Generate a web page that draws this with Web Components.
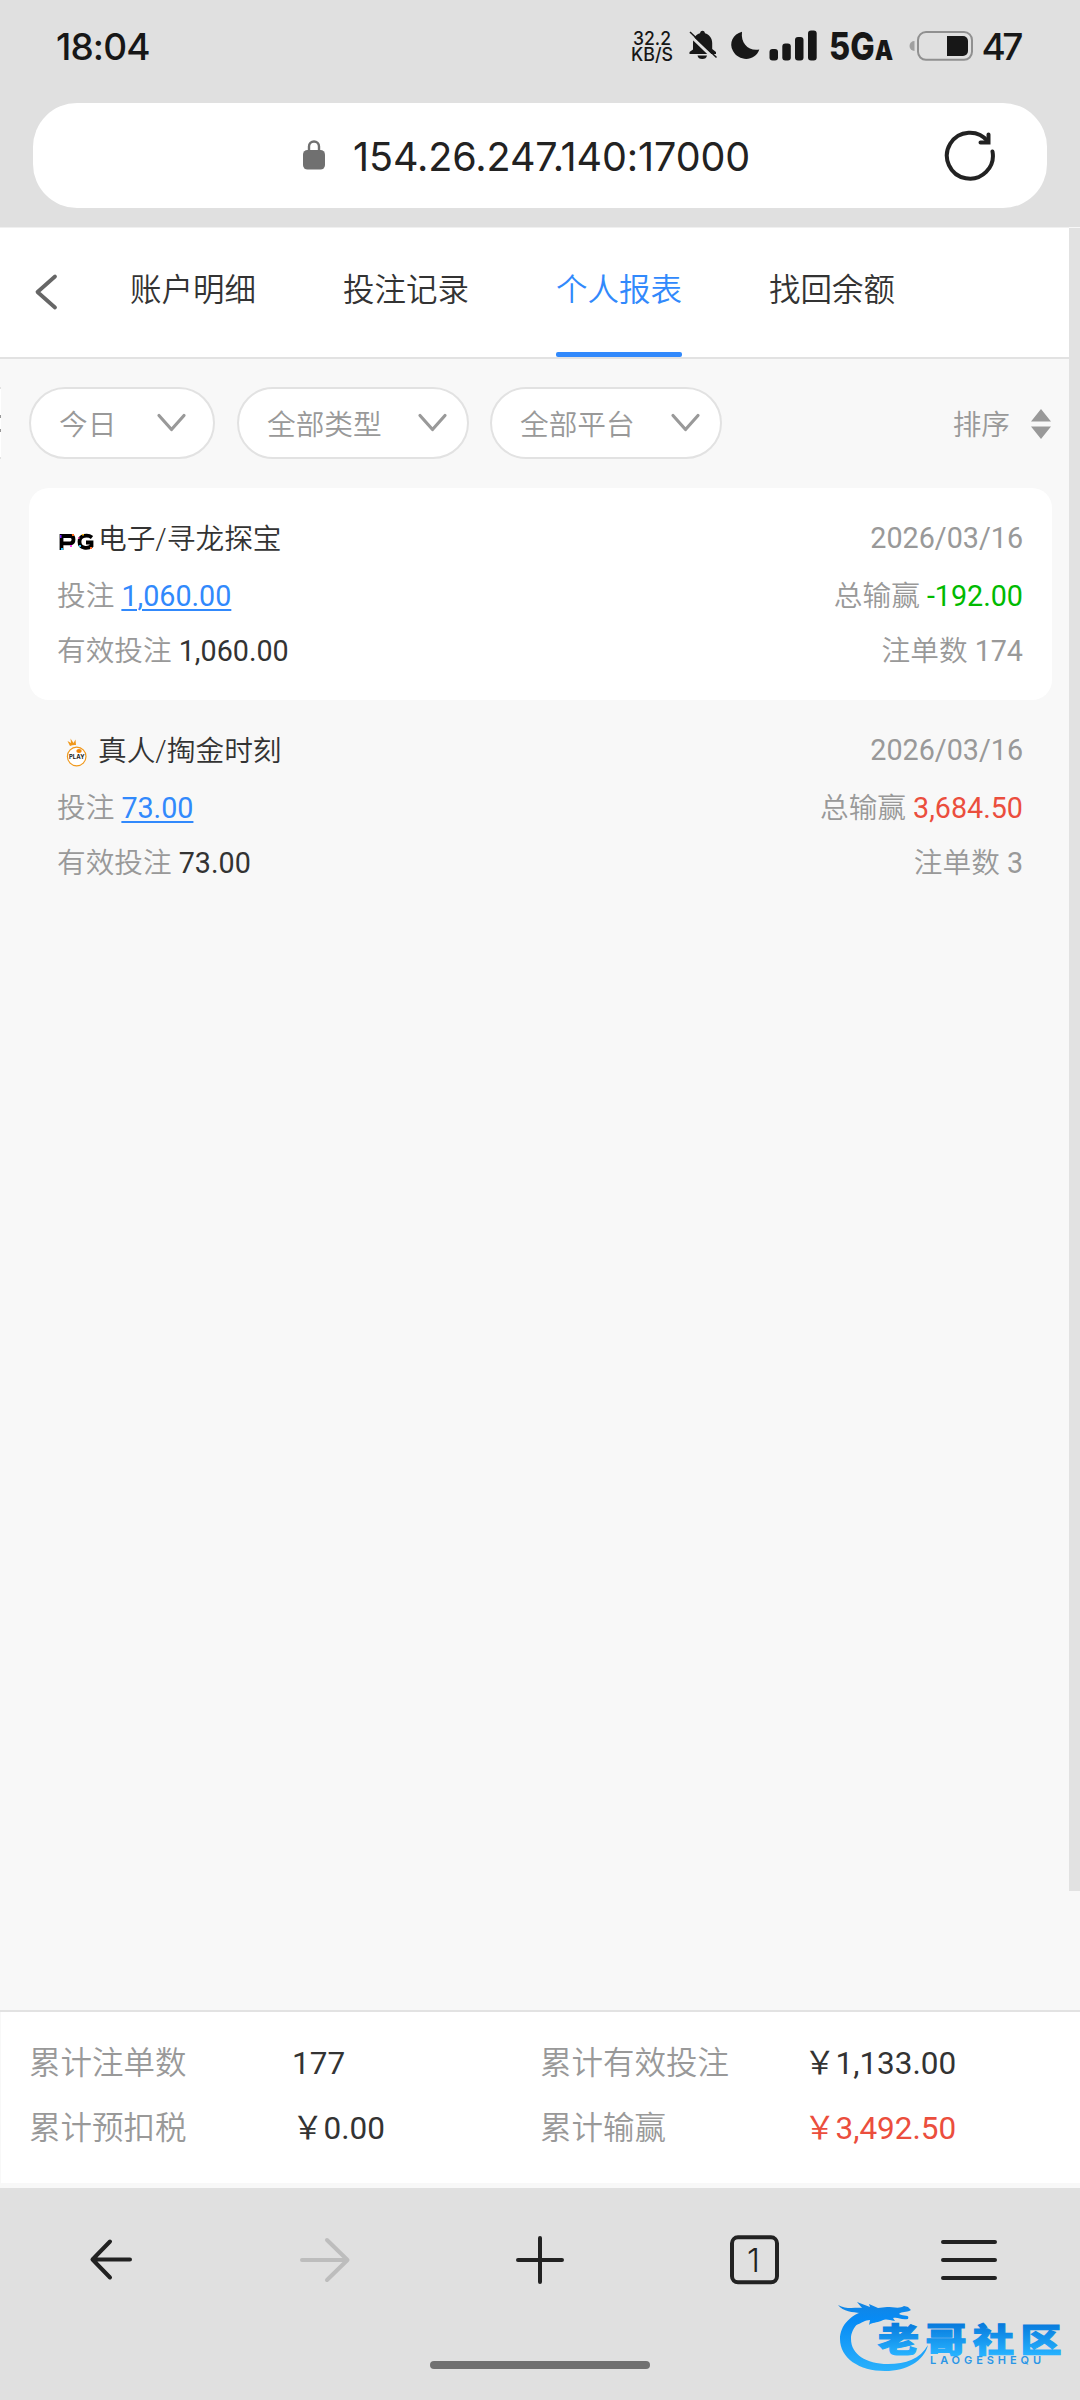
<!DOCTYPE html>
<html lang="zh-CN">
<head>
<meta charset="utf-8">
<title>个人报表</title>
<style>
html,body{margin:0;padding:0}
body{width:1080px;height:2400px;overflow:hidden;background:#f8f8f8;font-family:Roboto,"Noto Sans CJK SC",sans-serif;color:#333}
</style>
</head>
<body>
<report-screen></report-screen>
<script>
function define(name, html){
  const tpl=document.createElement('template');
  tpl.innerHTML=html;
  customElements.define(name, class extends HTMLElement{
    constructor(){super();this.attachShadow({mode:'open'}).appendChild(tpl.content.cloneNode(true));}
  });
}

define('status-bar', `
<style>
:host{display:flex;height:103px;box-sizing:border-box;font-family:Inter,sans-serif;color:#171717}
.time{margin:24px 0 0 56px;font-size:37px;line-height:46px;font-weight:450;letter-spacing:-.9px;flex:1}
svg{display:block;flex:none}
</style>
<div class="time">18:04</div>
<svg width="480" height="103" viewBox="600 0 480 103" fill="#171717">
  <text font-size="18.5" font-weight="450"><tspan x="633" y="44.800" textLength="38" lengthAdjust="spacingAndGlyphs">32.2</tspan><tspan x="631" y="60.800" textLength="42" lengthAdjust="spacingAndGlyphs">KB/S</tspan></text>
  <path d="M693 49.500V43C693 38 696 34.500 700 33.300C700.500 30 704.500 30 705 33.300C709 34.500 712.200 38 712.200 43V49L716 52V54H689.500V52Z"/>
  <path d="M697.500 55.500h9.500a4.800 4.200 0 0 1-9.500 0Z"/>
  <path d="M688 33.500L716 60.500" stroke="#e0e0e0" stroke-width="3"/>
  <path d="M690 32L716.500 57.500" stroke="#171717" stroke-width="1.500"/>
  <path d="M689.500 32L716.500 58" stroke="#e0e0e0" stroke-width="1" transform="translate(0 2)"/>
  <path d="M742 31.800C733 34 728.500 43 733 51C738.500 61.500 755 62 759.300 49.500C749 51.500 740.500 44 742 31.800Z"/>
  <rect x="769.500" y="49" width="8.500" height="11.500" rx="3"/><rect x="782.300" y="43.500" width="8.500" height="17" rx="3"/><rect x="795" y="37" width="8.500" height="23.500" rx="3"/><rect x="808" y="30.500" width="8.700" height="30" rx="3"/>
  <text x="829" y="59.500" font-size="38" font-weight="800" textLength="64" lengthAdjust="spacingAndGlyphs">5G<tspan font-size="27" font-weight="900">A</tspan></text>
  <path d="M914.500 41a5 5 0 0 0 0 10Z" fill="#a0a0a0"/>
  <rect x="918" y="32" width="54" height="27.800" rx="8" fill="none" stroke="#909090" stroke-width="2"/>
  <path d="M947 36h16a5 5 0 0 1 5 5v10a5 5 0 0 1-5 5H947Z"/>
  <text x="981.500" y="59.500" font-size="37" font-weight="450" textLength="42">47</text>
</svg>`);

define('address-bar', `
<style>
:host{display:flex;align-items:center;height:105px;margin:0 33px;border-radius:44px;background:#fff;font-family:Inter,sans-serif}
.lock{margin-left:265px}
.url{flex:1;margin:2px 0 0 23px;font-size:39.5px;line-height:48px;letter-spacing:-.1px;color:#222;white-space:nowrap}
.reload{margin:0 52px 2px 0}
svg{display:block;flex:none}
</style>
<svg class="lock" width="32" height="40" viewBox="298 136 32 40"><rect x="303" y="150" width="22" height="19.500" rx="4.500" fill="#707070"/><path d="M309 151v-4.500a5 5 0 0 1 10 0V151" fill="none" stroke="#707070" stroke-width="2.400"/></svg>
<div class="url">154.26.247.140:17000</div>
<svg class="reload" width="52" height="52" viewBox="943 129 52 52" fill="none" stroke="#222" stroke-width="4" stroke-linecap="round" stroke-linejoin="round"><path d="M992.500 151.500A23 23 0 1 1 988 141.500"/><path d="M988.500 134.500V142.500H980.500" stroke-linejoin="miter"/></svg>`);

define('tab-item', `
<style>
:host{display:flex;flex-direction:column;justify-content:space-between;width:126px;height:129px;font-size:31.5px;line-height:44px;white-space:nowrap}
span{margin-top:41px}
i{height:5px;border-radius:2px}
:host([active]){color:#3189fc}
:host([active]) i{background:#3189fc}
</style><span><slot></slot></span><i></i>`);

define('tab-bar', `
<style>
:host{display:flex;height:129px;background:#fff;border-bottom:2px solid #e2e2e2;border-top:1px solid #f0f0f0;font-weight:350}
svg{display:block;margin:45px 69px 0 33px;flex:none}
.tabs{display:flex;gap:87px}
</style>
<svg width="28" height="38" viewBox="33 273 28 38"><path d="M55 276.500L37.500 292L55 307.500" fill="none" stroke="#666" stroke-width="3.800" stroke-linecap="round" stroke-linejoin="round"/></svg>
<div class="tabs"><slot></slot></div>`);

define('filter-pill', `
<style>
:host{display:flex;align-items:center;justify-content:space-between;box-sizing:border-box;height:72px;border:2px solid #e2e2e2;border-radius:36px;background:#fff;color:#999;font-size:28.700px;font-weight:350;padding:0 19px 0 28px;flex:none}
svg{display:block}
span{line-height:40px;position:relative;top:2px}
</style><span><slot></slot></span>
<svg width="31" height="22" viewBox="0 0 31 22"><path d="M3 3.500L15.500 17.500L28 3.500" fill="none" stroke="#999" stroke-width="3.200" stroke-linecap="round" stroke-linejoin="round"/></svg>`);

define('filter-row', `
<style>
:host{display:flex;align-items:center;height:72px;padding:28px 0 29px;font-size:28.700px;font-weight:350;color:#999}
.prev{width:1px;height:68px;border:solid #e2e2e2;border-width:2px 0;background:#fff;display:flex;flex-direction:column;align-items:flex-start;justify-content:center;gap:11px;margin-right:28px}
.prev b{width:1px;height:3px;background:#999}
.sort{margin-left:auto;line-height:40px;position:relative;top:2px}
svg{display:block;margin:1px 17px 0 21px}
</style><div class="prev"><b></b><b></b></div><slot></slot><span class="sort">排序</span>
<svg width="21" height="30" viewBox="0 0 21 30" fill="#999"><path d="M0 12.500L10 0L20 12.500ZM0 17.500H20L10 30Z"/></svg>`);

define('bet-record', `
<style>
:host{display:flex;flex-direction:column;box-sizing:border-box;height:212px;margin:0 17px 0 29px;padding:30px 29px 0 28px;border-radius:20px;font-size:28.700px;line-height:42px;color:#999;white-space:nowrap}
:host([card]){background:#fff}
.r{display:flex;justify-content:space-between;height:57px}
.r.m{height:55px}
.t{display:flex;color:#333}
.logo{width:41px;height:42px;flex:none}
.c{font-weight:350}
::slotted([slot=title]){font-weight:350}
::slotted([slot=date]){position:relative;top:-1px}
::slotted(u){font-weight:400;color:#3189fc;text-decoration-thickness:2px;text-underline-offset:3px}
::slotted(b){font-weight:400;color:#333}
::slotted([slot=count]){font-weight:400}
::slotted([slot=net]){font-weight:400}
::slotted(.win){color:#eb4e3d}
::slotted(.loss){color:#00ba00}
</style>
<div class="r"><span class="t"><span class="logo"><slot name="logo"></slot></span><slot name="title"></slot></span><slot name="date"></slot></div>
<div class="r m"><span class="c">投注 <slot name="bet"></slot></span><span class="c">总输赢 <slot name="net"></slot></span></div>
<div class="r"><span class="c">有效投注 <slot name="valid"></slot></span><span class="c">注单数 <slot name="count"></slot></span></div>`);

define('totals-bar', `
<style>
:host{display:grid;grid-template-columns:263px 248px 264px 1fr;grid-template-rows:65px 65px;box-sizing:border-box;height:173px;border-top:2px solid #e2e2e2;background:#fff;padding:19px 0 0 29px;font-size:31.500px;line-height:65px;font-weight:350;color:#999;white-space:nowrap;box-shadow:inset 1px 0 #f8f8f8}
b{font-weight:400;color:#333}
.red{color:#eb4e3d}
</style>
<span>累计注单数</span><b>177</b><span>累计有效投注</span><b>¥1,133.00</b>
<span>累计预扣税</span><b>¥0.00</b><span>累计输赢</span><b class="red">¥3,492.50</b>`.replace(/¥/g,'\uFFE5'));

define('browser-nav', `
<style>
:host{display:flex;flex-direction:column;align-items:center;justify-content:space-between;box-sizing:border-box;height:212px;background:#e0e0e0;padding:31px 0}
svg{display:block;width:1080px;height:80px}
i{width:220px;height:8px;border-radius:4px;background:#707070}
</style>
<svg viewBox="0 2219 1080 80" fill="none" stroke="#222" stroke-width="4" stroke-linecap="round" stroke-linejoin="round">
<path d="M130 2259.500H92.500M110 2241.500L92.500 2259.500L110 2277.500"/>
<path d="M302 2260H347.500M327 2240L347.500 2260L327 2280" stroke="#bdbdbd"/>
<path d="M518 2260H562M540 2238V2282"/>
<rect x="732" y="2237.300" width="45" height="45" rx="6"/>
<text x="747" y="2272" font-family="Inter,sans-serif" font-size="33" font-weight="350" fill="#222" stroke="none">1</text>
<path d="M943 2242H995M943 2260H995M943 2278H995"/>
</svg><i></i>`);

define('site-watermark', `
<style>
:host{position:absolute;left:830px;top:2285px;width:240px;height:95px}
svg{display:block}
</style>
<svg width="240" height="95" viewBox="830 2285 240 95">
<defs><linearGradient id="g" gradientUnits="userSpaceOnUse" x1="0" y1="2298" x2="0" y2="2372"><stop offset="0" stop-color="#1683de"/><stop offset=".3" stop-color="#078bf5"/><stop offset="1" stop-color="#2bb2fc"/></linearGradient>
<linearGradient id="h" gradientUnits="userSpaceOnUse" x1="0" y1="-30" x2="0" y2="3"><stop offset="0" stop-color="#087bdd"/><stop offset="1" stop-color="#26b2ff"/></linearGradient></defs>
<g fill="url(#g)">
<path d="M872 2309C850 2313 840 2326 840 2339C840 2358 859 2371 885 2371C907 2371 924 2361 928 2345C920 2359 906 2364 888 2364C866 2364 851 2354 851 2339C851 2327 862 2316 881 2313Z"/>
<path d="M838 2305C847 2310 856 2307 862 2308L857 2302L870 2307L869 2304L878 2308L887 2307C893 2307 900 2309 904 2306L908 2307L911 2310C906 2313 902 2311 899 2314C904 2317 910 2314 908 2319C900 2320 899 2317 893 2318L895 2321C888 2320 887 2318 881 2321C877 2323 872 2322 869 2325L870 2320C865 2320 862 2323 856 2325L860 2313C853 2312 843 2312 838 2305Z"/>
</g>
<g transform="translate(878 2352) scale(1.140 .930)"><text x="0" y="0" textLength="161" fill="url(#h)" font-family="'Noto Sans CJK SC',sans-serif" font-weight="900" font-size="36" stroke="url(#h)" stroke-width="1.200">老哥社区</text></g>
<text x="930" y="2364" font-family="Inter,sans-serif" font-size="11" font-weight="600" fill="#2a96e6" textLength="111">LAOGESHEQU</text>
</svg>`);

define('report-screen', `
<style>
:host{display:flex;flex-direction:column;width:1080px;height:2400px;position:relative;background:#f8f8f8}
header{height:227px;background:#e0e0e0;flex:none}
main{display:flex;height:1783px;flex:none}
.page{width:1069px}
.scroll{width:11px;height:1663px;margin-top:1px;background:#e2e2e2}
.space{height:5px}
.logo{display:block}
</style>
<header><status-bar></status-bar><address-bar></address-bar></header>
<main><div class="page">
<tab-bar><tab-item>账户明细</tab-item><tab-item>投注记录</tab-item><tab-item active>个人报表</tab-item><tab-item>找回余额</tab-item></tab-bar>
<filter-row><filter-pill style="width:186px;margin-right:22px;padding-right:26px">今日</filter-pill><filter-pill style="width:232px;margin-right:21px">全部类型</filter-pill><filter-pill style="width:232px">全部平台</filter-pill></filter-row>
<bet-record card>
<svg slot="logo" class="logo" width="41" height="42" viewBox="57 518 41 42"><g fill="none" stroke="#000" stroke-width="3.800"><path d="M61.500 550V536H70.500Q73.500 536 73.500 539.500T70.500 543.300H62"/><path d="M92 537.500C88 534.500 79.500 535 79.500 541.800C79.500 549 88 549 91.500 546V542.500H86"/></g><g><path d="M60 535h1.500v3H60Z" fill="#7620ff"/><path d="M72 534h2v2h-2Z" fill="#ff6b17"/><path d="M61 548h2v2h-2Z" fill="#21bfff"/><path d="M70 545h2v2h-2Z" fill="#f03cf0"/><path d="M82 534h2v1.500h-2Z" fill="#f7b514"/><path d="M78 537h1.500v2H78Z" fill="#f24aa5"/><path d="M79 545h2v2h-2Z" fill="#3cc0f5"/><path d="M90 547h2v2h-2Z" fill="#ff6922"/></g></svg>
<span slot="title">电子/寻龙探宝</span><span slot="date">2026/03/16</span><u slot="bet">1,060.00</u><span slot="net" class="loss">-192.00</span><b slot="valid">1,060.00</b><span slot="count">174</span></bet-record>
<bet-record>
<svg slot="logo" class="logo" width="41" height="42" viewBox="57 730 41 42"><circle cx="76.700" cy="756.500" r="9.300" fill="#fff" stroke="#f0981b" stroke-width="1.200"/><path d="M70 746L67.500 741L71 743L70.500 738.500L73.500 743L75.500 739.500L76 745Q73 744.500 70 746Z" fill="#f0981b"/><ellipse cx="79" cy="751" rx="2.700" ry="2" fill="#f08508"/><text x="69" y="759.300" font-family="Inter,sans-serif" font-size="6.800" font-weight="700" fill="#222" textLength="15.500" lengthAdjust="spacingAndGlyphs">PLAY</text></svg>
<span slot="title">真人/掏金时刻</span><span slot="date">2026/03/16</span><u slot="bet">73.00</u><span slot="net" class="win">3,684.50</span><b slot="valid">73.00</b><span slot="count">3</span></bet-record>
</div><div class="scroll"></div></main>
<totals-bar></totals-bar><div class="space"></div><browser-nav></browser-nav><site-watermark></site-watermark>`);
</script>
</body>
</html>
